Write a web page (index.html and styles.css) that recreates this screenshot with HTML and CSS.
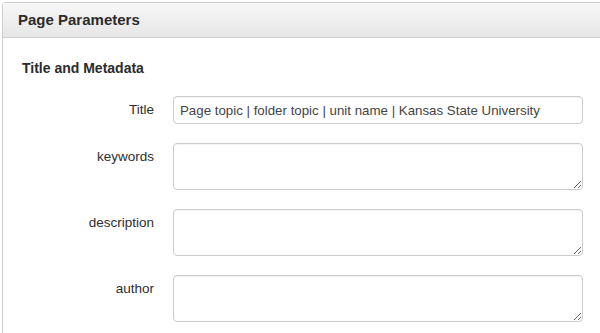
FILE: index.html
```html
<!DOCTYPE html>
<html>
<head>
<meta charset="utf-8">
<link rel="stylesheet" href="styles.css">
</head>
<body>
<div class="panel">
  <div class="panel-heading">Page Parameters</div>
  <div class="panel-body">
    <h4 class="section-title">Title and Metadata</h4>
    <form class="form">
      <label class="label" for="title">Title</label>
      <input class="control input" id="title" type="text" value="Page topic | folder topic | unit name | Kansas State University">
      <label class="label" for="keywords">keywords</label>
      <textarea class="control area" id="keywords"></textarea>
      <label class="label" for="description">description</label>
      <textarea class="control area" id="description"></textarea>
      <label class="label" for="author">author</label>
      <textarea class="control area" id="author"></textarea>
    </form>
  </div>
</div>
</body>
</html>
```

FILE: styles.css
```css
html, body {
  margin: 0;
  padding: 0;
  overflow: hidden;
  background: #fff;
}
body {
  padding: 2px 0 0 2px;
  font-family: "Liberation Sans", Arial, Helvetica, sans-serif;
  color: #333;
}
.panel {
  width: 660px;
  border: 1px solid #cfcfcf;
  border-radius: 3px;
  background: #fff;
}
.panel-heading {
  height: 34px;
  line-height: 34px;
  padding-left: 15px;
  font-size: 15px;
  font-weight: bold;
  color: #2b2b2b;
  background: linear-gradient(#f7f7f7, #e6e6e6);
  border-bottom: 1px solid #cdcdcd;
}
.panel-body {
  padding: 19px 0 20px 19px;
}
.section-title {
  margin: 1px 0 0 0;
  line-height: 20px;
  font-size: 14px;
  font-weight: bold;
  color: #2b2b2b;
}
.form {
  margin-top: 18px;
  display: grid;
  grid-template-columns: 132px 410px;
  column-gap: 19px;
  row-gap: 19px;
}
.label {
  text-align: right;
  font-size: 13.5px;
  line-height: 20px;
  padding-top: 4px;
  color: #2e2e2e;
}
.control {
  box-sizing: border-box;
  width: 410px;
  margin: 0;
  border: 1px solid #cccccc;
  border-radius: 4px;
  background: #fff;
  font-family: "Liberation Sans", Arial, Helvetica, sans-serif;
  font-size: 13.3px;
  color: #444;
  box-shadow: inset 0 1px 1px rgba(0,0,0,0.05);
  outline: none;
}
.input {
  height: 28px;
  padding: 0 6px;
}
.area {
  height: 47px;
  padding: 4px 6px;
  resize: vertical;
  display: block;
}
```
